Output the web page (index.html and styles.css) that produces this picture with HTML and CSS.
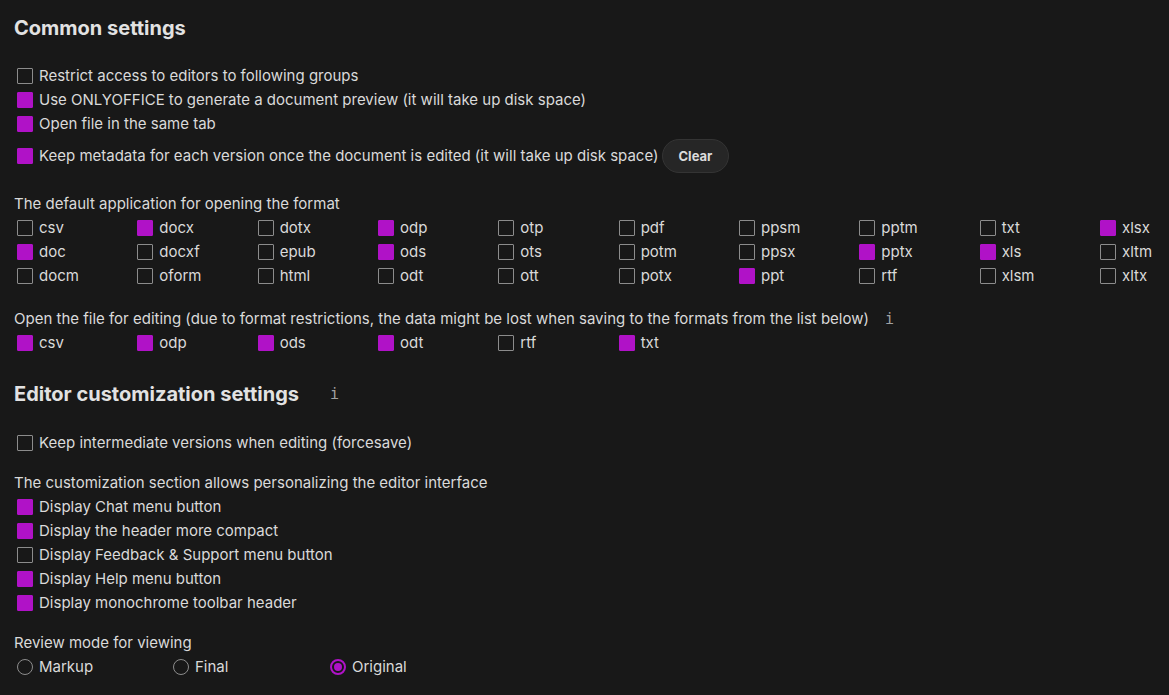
FILE: index.html
```html
<!DOCTYPE html>
<html>
<head>
<meta charset="utf-8">
<link rel="stylesheet" href="styles.css">
</head>
<body>
<div class="page">
  <h2 class="heading">Common settings</h2>
  <div class="list first">
    <label class="row"><span class="cb"></span>Restrict access to editors to following groups</label>
    <label class="row"><span class="cb on"></span>Use ONLYOFFICE to generate a document preview (it will take up disk space)</label>
    <label class="row"><span class="cb on"></span>Open file in the same tab</label>
    <div class="row tall"><span class="cb on"></span>Keep metadata for each version once the document is edited (it will take up disk space)<button class="btn">Clear</button></div>
  </div>

  <p class="label l1">The default application for opening the format</p>
  <div class="grid">
    <label class="row"><span class="cb"></span>csv</label>
    <label class="row"><span class="cb on"></span>docx</label>
    <label class="row"><span class="cb"></span>dotx</label>
    <label class="row"><span class="cb on"></span>odp</label>
    <label class="row"><span class="cb"></span>otp</label>
    <label class="row"><span class="cb"></span>pdf</label>
    <label class="row"><span class="cb"></span>ppsm</label>
    <label class="row"><span class="cb"></span>pptm</label>
    <label class="row"><span class="cb"></span>txt</label>
    <label class="row"><span class="cb on"></span>xlsx</label>

    <label class="row"><span class="cb on"></span>doc</label>
    <label class="row"><span class="cb"></span>docxf</label>
    <label class="row"><span class="cb"></span>epub</label>
    <label class="row"><span class="cb on"></span>ods</label>
    <label class="row"><span class="cb"></span>ots</label>
    <label class="row"><span class="cb"></span>potm</label>
    <label class="row"><span class="cb"></span>ppsx</label>
    <label class="row"><span class="cb on"></span>pptx</label>
    <label class="row"><span class="cb on"></span>xls</label>
    <label class="row"><span class="cb"></span>xltm</label>

    <label class="row"><span class="cb"></span>docm</label>
    <label class="row"><span class="cb"></span>oform</label>
    <label class="row"><span class="cb"></span>html</label>
    <label class="row"><span class="cb"></span>odt</label>
    <label class="row"><span class="cb"></span>ott</label>
    <label class="row"><span class="cb"></span>potx</label>
    <label class="row"><span class="cb on"></span>ppt</label>
    <label class="row"><span class="cb"></span>rtf</label>
    <label class="row"><span class="cb"></span>xlsm</label>
    <label class="row"><span class="cb"></span>xltx</label>
  </div>

  <p class="label l2">Open the file for editing (due to format restrictions, the data might be lost when saving to the formats from the list below)<span class="info info-sm">i</span></p>
  <div class="grid">
    <label class="row"><span class="cb on"></span>csv</label>
    <label class="row"><span class="cb on"></span>odp</label>
    <label class="row"><span class="cb on"></span>ods</label>
    <label class="row"><span class="cb on"></span>odt</label>
    <label class="row"><span class="cb"></span>rtf</label>
    <label class="row"><span class="cb on"></span>txt</label>
  </div>

  <h2 class="heading h-second">Editor customization settings<span class="info info-h">i</span></h2>
  <div class="list second">
    <label class="row"><span class="cb"></span>Keep intermediate versions when editing (forcesave)</label>
  </div>

  <p class="label l1">The customization section allows personalizing the editor interface</p>
  <div class="list">
    <label class="row"><span class="cb on"></span>Display Chat menu button</label>
    <label class="row"><span class="cb on"></span>Display the header more compact</label>
    <label class="row"><span class="cb"></span>Display Feedback &amp; Support menu button</label>
    <label class="row"><span class="cb on"></span>Display Help menu button</label>
    <label class="row"><span class="cb on"></span>Display monochrome toolbar header</label>
  </div>

  <p class="label l1">Review mode for viewing</p>
  <div class="radios">
    <label class="row"><span class="rb"></span>Markup</label>
    <label class="row"><span class="rb"></span>Final</label>
    <label class="row"><span class="rb on"></span>Original</label>
  </div>
</div>
</body>
</html>
```

FILE: styles.css
```css
html, body {
  margin: 0;
  padding: 0;
  background: #181818;
  height: 100%;
}
body {
  font-family: Inter, "Noto Sans", sans-serif;
  font-size: 15px;
  color: #dadada;
  overflow: hidden;
}
.page {
  padding: 13px 14px 0 14px;
}
.heading {
  margin: 0;
  font-size: 20px;
  line-height: 30px;
  font-weight: 700;
  color: #e2e2e2;
  display: flex;
  align-items: center;
}
.h-second {
  margin-top: 24px;
}
.list.first {
  margin-top: 21px;
}
.list.second {
  margin-top: 22px;
}
.row {
  display: flex;
  align-items: center;
  height: 24px;
  line-height: 24px;
  white-space: nowrap;
}
.row.tall {
  height: 40px;
}
.cb {
  box-sizing: border-box;
  width: 16px;
  height: 16px;
  border: 1px solid #8c8c8c;
  border-radius: 1px;
  margin: 0 6px 0 3px;
  flex: none;
}
.cb.on {
  background: #b012c7;
  border-color: #b012c7;
}
.btn {
  margin-left: 3px;
  height: 34px;
  padding: 0 16px;
  border-radius: 17px;
  background: #262626;
  border: 1px solid #343434;
  color: #dcdcdc;
  font-family: Inter, "Noto Sans", sans-serif;
  font-size: 13px;
  font-weight: 700;
}
.label {
  margin: 0;
  line-height: 24px;
  display: flex;
  align-items: center;
}
.l1 {
  margin-top: 16px;
}
.l2 {
  margin-top: 19px;
}
.grid {
  display: grid;
  grid-template-columns: repeat(10, 120.33px);
}
.info {
  font-family: "DejaVu Sans Mono", monospace;
  color: #a0a0a0;
  font-size: 15px;
}
.info-sm {
  margin-left: 16px;
}
.info-h {
  margin-left: 31px;
  font-weight: 400;
}
.radios {
  display: flex;
}
.radios .row:nth-child(1) { width: 156px; }
.radios .row:nth-child(2) { width: 157px; }
.rb {
  box-sizing: border-box;
  width: 16px;
  height: 16px;
  border: 1px solid #8c8c8c;
  border-radius: 50%;
  margin: 0 6px 0 3px;
  flex: none;
  position: relative;
}
.rb.on {
  border: 2px solid #b012c7;
}
.rb.on::after {
  content: "";
  position: absolute;
  left: 2px;
  top: 2px;
  width: 8px;
  height: 8px;
  border-radius: 50%;
  background: #b012c7;
}
```
